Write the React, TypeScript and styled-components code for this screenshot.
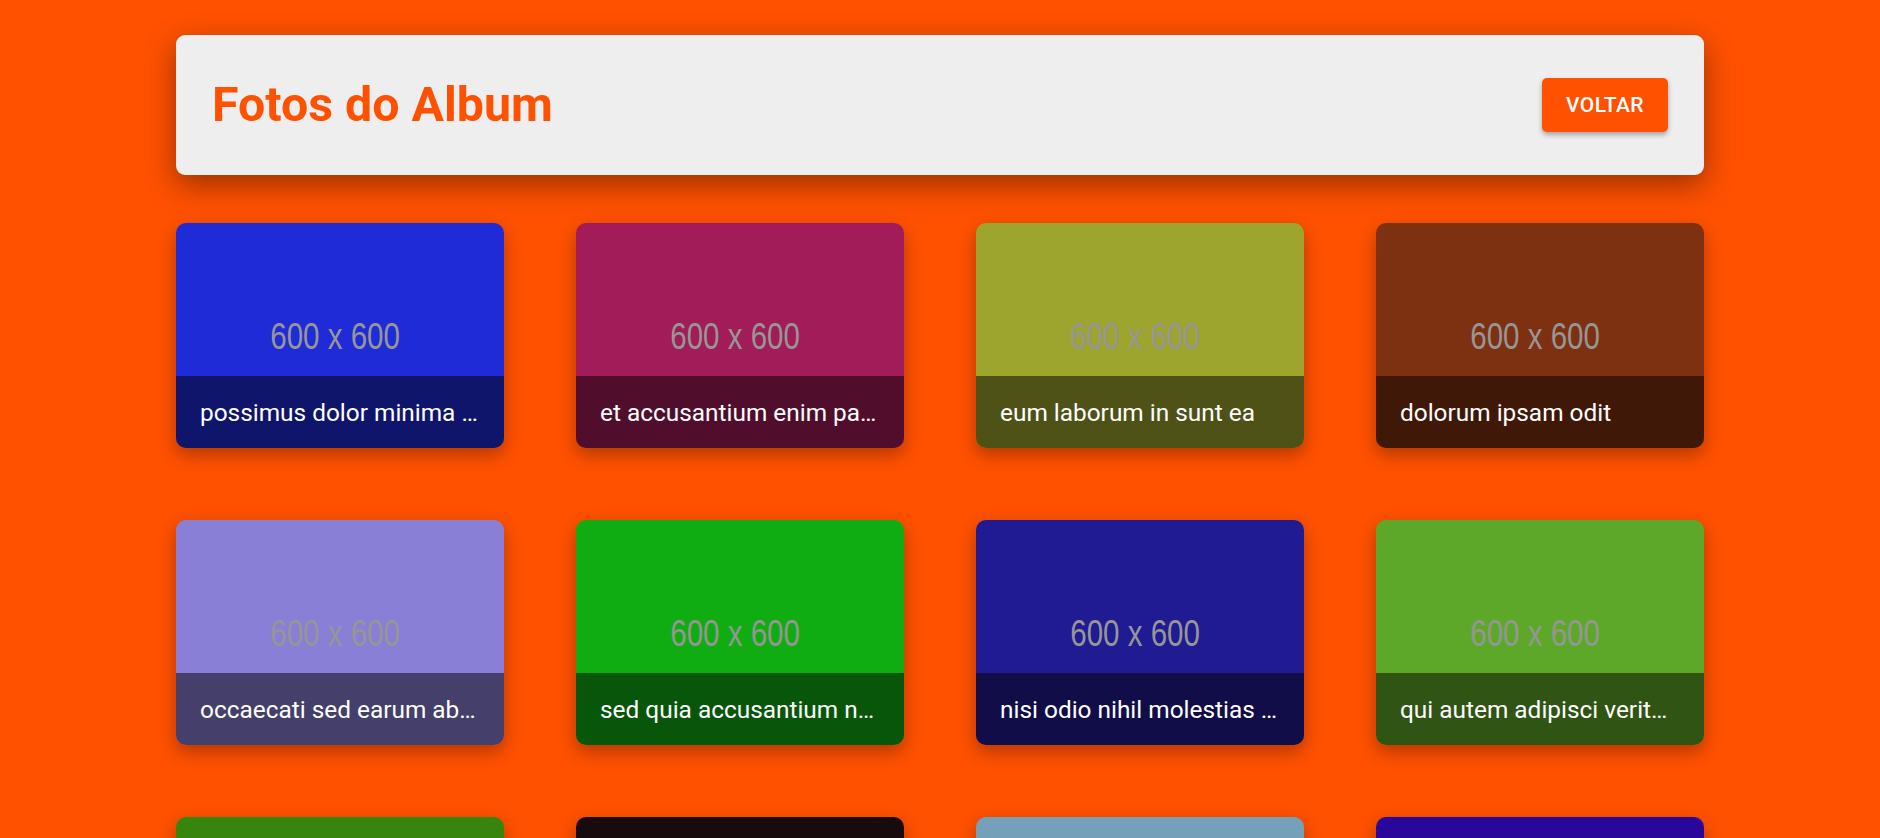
import React from "react";
import styled, { createGlobalStyle } from "styled-components";

const GlobalStyle = createGlobalStyle`
  html, body {
    margin: 0;
    padding: 0;
    background: #ff5100;
  }
  body {
    font-family: Roboto, "Liberation Sans", Arial, sans-serif;
  }
  * { box-sizing: border-box; }
`;

const Page = styled.div`
  width: 1528px;
  margin: 0 auto;
  padding: 35px 0 72px;
`;

const Header = styled.header`
  height: 140px;
  background: #eeeeee;
  border-radius: 9px;
  box-shadow: 0 10px 30px rgba(0, 0, 0, 0.4);
  display: flex;
  align-items: center;
  justify-content: space-between;
  padding: 0 36px 0 36px;
`;

const Title = styled.h1`
  margin: 0;
  font-family: Roboto, "Liberation Sans", sans-serif;
  font-weight: 700;
  font-size: 48.3px;
  line-height: 1;
  color: #ff5100;
`;

const BackButton = styled.button`
  height: 54px;
  padding: 0 24px;
  border: none;
  border-radius: 5px;
  background: #ff5100;
  color: #ffffff;
  font-family: Roboto, "Liberation Sans", sans-serif;
  font-weight: 500;
  font-size: 21px;
  letter-spacing: 0.4px;
  text-transform: uppercase;
  box-shadow: 0 3px 5px rgba(0, 0, 0, 0.3);
  cursor: pointer;
`;

const Grid = styled.main`
  margin-top: 48px;
  display: grid;
  grid-template-columns: repeat(4, 328px);
  column-gap: 72px;
  row-gap: 72px;
`;

const Card = styled.article`
  height: 225px;
  border-radius: 10px;
  overflow: hidden;
  display: flex;
  flex-direction: column;
  box-shadow: 0 7px 18px rgba(0, 0, 0, 0.3);
`;

const Picture = styled.div<{ $bg: string }>`
  height: 153px;
  background: ${(p) => p.$bg};
  display: flex;
  align-items: flex-end;
  justify-content: center;
  padding: 0 10px 24px 0;
`;

const PictureLabel = styled.span`
  display: inline-block;
  font-family: "Liberation Sans", Arial, sans-serif;
  font-size: 36px;
  line-height: 30px;
  color: #969696;
  white-space: nowrap;
  transform: scaleX(0.82);
`;

const Caption = styled.div<{ $bg: string }>`
  height: 72px;
  background: ${(p) => p.$bg};
  display: flex;
  align-items: center;
`;

const CaptionInner = styled.div`
  flex: 1;
  background: rgba(0, 0, 0, 0.5);
  height: 100%;
  display: flex;
  align-items: center;
  padding: 0 24px;
  min-width: 0;
`;

const CaptionText = styled.span`
  font-family: Roboto, "Liberation Sans", sans-serif;
  font-size: 24.4px;
  color: #ffffff;
  white-space: nowrap;
  overflow: hidden;
  text-overflow: ellipsis;
  min-width: 0;
`;

const photos = [
  { title: "possimus dolor minima provident ipsam", color: "#1f2bd6" },
  { title: "et accusantium enim pariatur eum nihil fugit", color: "#a11c58" },
  { title: "eum laborum in sunt ea", color: "#9da52f" },
  { title: "dolorum ipsam odit", color: "#7e3110" },
  { title: "occaecati sed earum ab rerum et", color: "#897fd7" },
  { title: "sed quia accusantium nemo placeat dolor ut", color: "#0fad12" },
  { title: "nisi odio nihil molestias facere laudantium", color: "#201b92" },
  { title: "qui autem adipisci veritatis iure necessitatibus", color: "#5ea829" },
  { title: "voluptas sit deserunt ullam quas", color: "#37850c" },
  { title: "fugit et eos molestiae ut repellat", color: "#170b0e" },
  { title: "aut non sint quasi minus aut", color: "#74a0ba" },
  { title: "natus cumque ipsa quod ducimus", color: "#2a079b" },
];

export default function App() {
  return (
    <>
      <GlobalStyle />
      <Page>
        <Header>
          <Title>Fotos do Album</Title>
          <BackButton>Voltar</BackButton>
        </Header>
        <Grid>
          {photos.map((p, i) => (
            <Card key={i}>
              <Picture $bg={p.color}>
                <PictureLabel>600 x 600</PictureLabel>
              </Picture>
              <Caption $bg={p.color}>
                <CaptionInner>
                  <CaptionText>{p.title}</CaptionText>
                </CaptionInner>
              </Caption>
            </Card>
          ))}
        </Grid>
      </Page>
    </>
  );
}
